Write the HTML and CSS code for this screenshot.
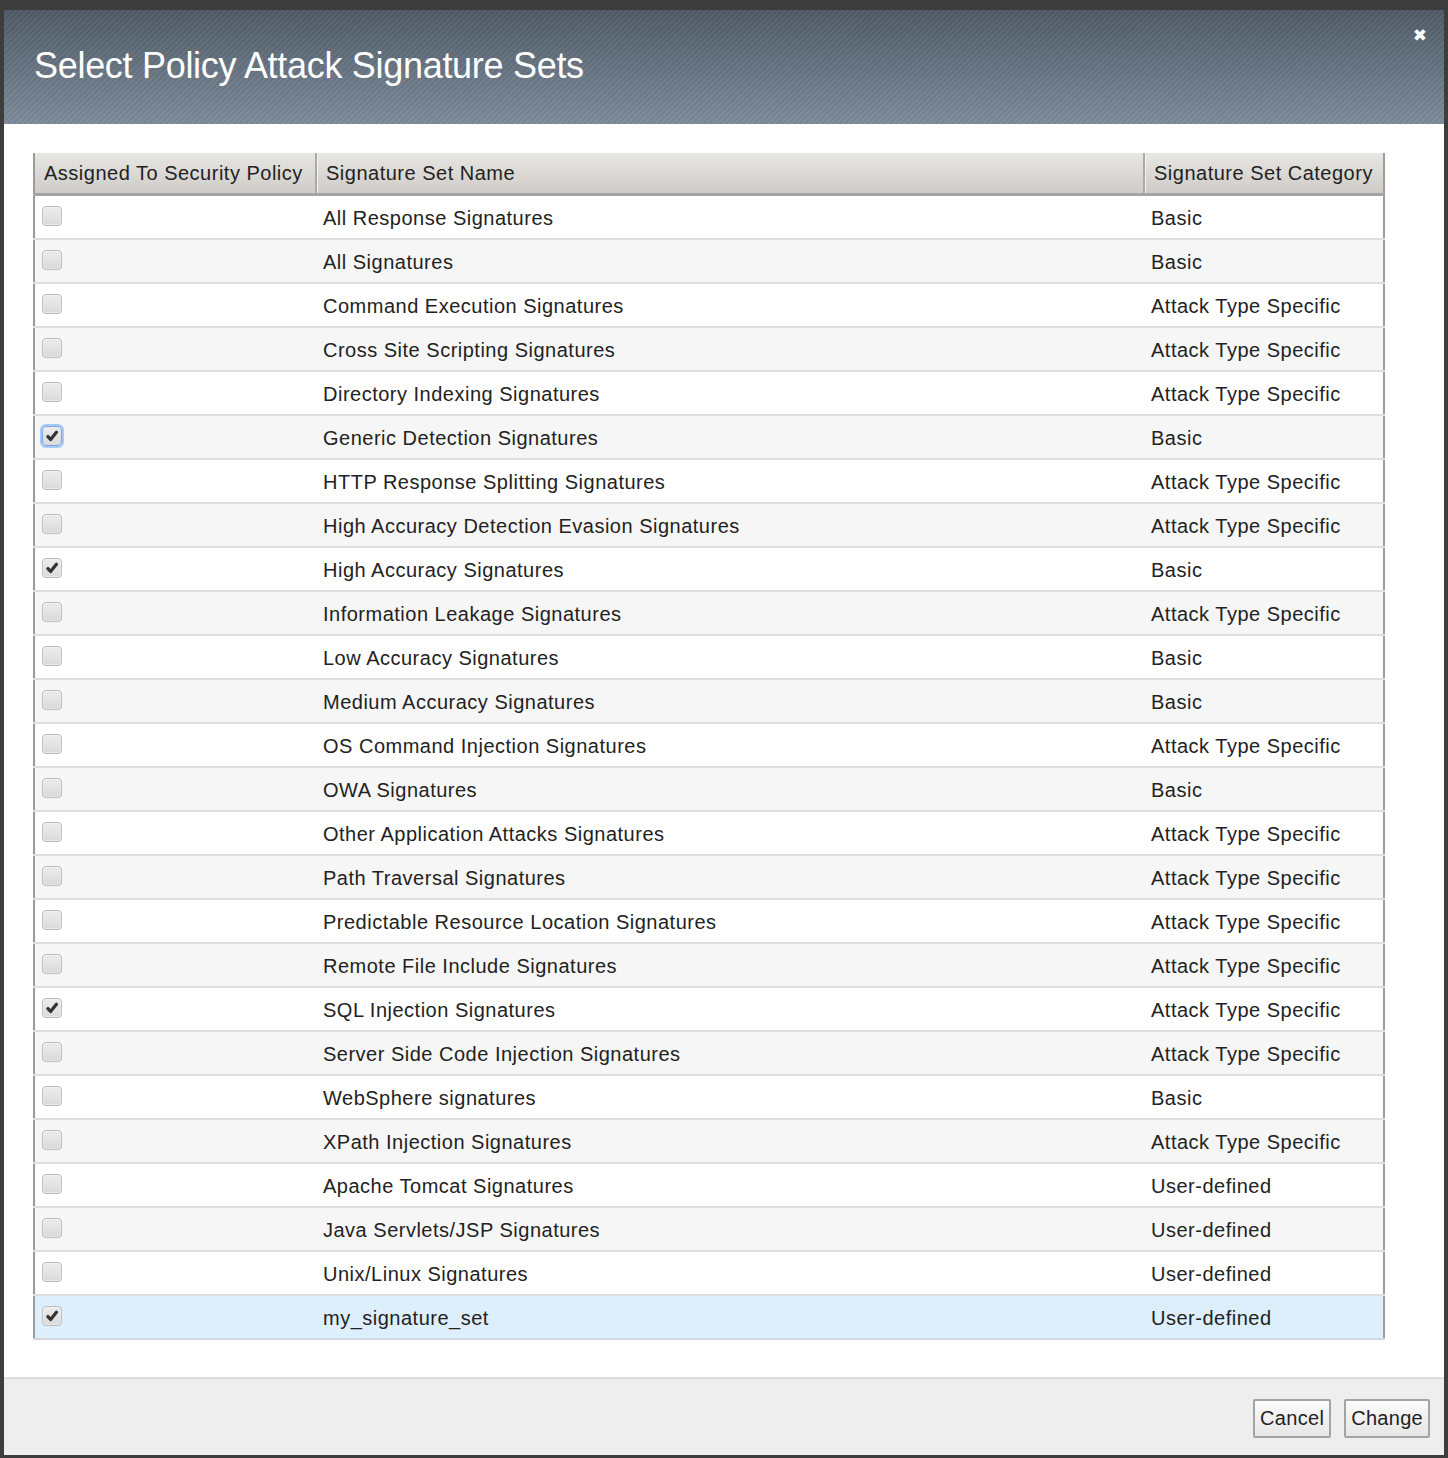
FILE: index.html
```html
<!DOCTYPE html>
<html>
<head>
<meta charset="utf-8">
<link rel="stylesheet" href="styles.css">
</head>
<body>
<div class="dialog">
  <div class="titlebar">
    <h1 class="title">Select Policy Attack Signature Sets</h1>
    <span class="close">&#x2716;</span>
  </div>
  <div class="content">
    <table class="grid">
      <colgroup><col class="c1"><col class="c2"><col class="c3"></colgroup>
      <thead>
        <tr><th>Assigned To Security Policy</th><th>Signature Set Name</th><th>Signature Set Category</th></tr>
      </thead>
      <tbody>
        <tr><td><span class="cb"></span></td><td>All Response Signatures</td><td>Basic</td></tr>
        <tr><td><span class="cb"></span></td><td>All Signatures</td><td>Basic</td></tr>
        <tr><td><span class="cb"></span></td><td>Command Execution Signatures</td><td>Attack Type Specific</td></tr>
        <tr><td><span class="cb"></span></td><td>Cross Site Scripting Signatures</td><td>Attack Type Specific</td></tr>
        <tr><td><span class="cb"></span></td><td>Directory Indexing Signatures</td><td>Attack Type Specific</td></tr>
        <tr><td><span class="cb checked focus"><svg viewBox="0 0 12 12"><path d="M2.5 6.5 L4.8 9 L9.8 2.8" /></svg></span></td><td>Generic Detection Signatures</td><td>Basic</td></tr>
        <tr><td><span class="cb"></span></td><td>HTTP Response Splitting Signatures</td><td>Attack Type Specific</td></tr>
        <tr><td><span class="cb"></span></td><td>High Accuracy Detection Evasion Signatures</td><td>Attack Type Specific</td></tr>
        <tr><td><span class="cb checked"><svg viewBox="0 0 12 12"><path d="M2.5 6.5 L4.8 9 L9.8 2.8" /></svg></span></td><td>High Accuracy Signatures</td><td>Basic</td></tr>
        <tr><td><span class="cb"></span></td><td>Information Leakage Signatures</td><td>Attack Type Specific</td></tr>
        <tr><td><span class="cb"></span></td><td>Low Accuracy Signatures</td><td>Basic</td></tr>
        <tr><td><span class="cb"></span></td><td>Medium Accuracy Signatures</td><td>Basic</td></tr>
        <tr><td><span class="cb"></span></td><td>OS Command Injection Signatures</td><td>Attack Type Specific</td></tr>
        <tr><td><span class="cb"></span></td><td>OWA Signatures</td><td>Basic</td></tr>
        <tr><td><span class="cb"></span></td><td>Other Application Attacks Signatures</td><td>Attack Type Specific</td></tr>
        <tr><td><span class="cb"></span></td><td>Path Traversal Signatures</td><td>Attack Type Specific</td></tr>
        <tr><td><span class="cb"></span></td><td>Predictable Resource Location Signatures</td><td>Attack Type Specific</td></tr>
        <tr><td><span class="cb"></span></td><td>Remote File Include Signatures</td><td>Attack Type Specific</td></tr>
        <tr><td><span class="cb checked"><svg viewBox="0 0 12 12"><path d="M2.5 6.5 L4.8 9 L9.8 2.8" /></svg></span></td><td>SQL Injection Signatures</td><td>Attack Type Specific</td></tr>
        <tr><td><span class="cb"></span></td><td>Server Side Code Injection Signatures</td><td>Attack Type Specific</td></tr>
        <tr><td><span class="cb"></span></td><td>WebSphere signatures</td><td>Basic</td></tr>
        <tr><td><span class="cb"></span></td><td>XPath Injection Signatures</td><td>Attack Type Specific</td></tr>
        <tr><td><span class="cb"></span></td><td>Apache Tomcat Signatures</td><td>User-defined</td></tr>
        <tr><td><span class="cb"></span></td><td>Java Servlets/JSP Signatures</td><td>User-defined</td></tr>
        <tr><td><span class="cb"></span></td><td>Unix/Linux Signatures</td><td>User-defined</td></tr>
        <tr class="selected"><td><span class="cb checked"><svg viewBox="0 0 12 12"><path d="M2.5 6.5 L4.8 9 L9.8 2.8" /></svg></span></td><td>my_signature_set</td><td>User-defined</td></tr>
      </tbody>
    </table>
  </div>
  <div class="footer">
    <button class="btn">Cancel</button>
    <button class="btn">Change</button>
  </div>
</div>
</body>
</html>
```
FILE: styles.css
```css
html, body {
  margin: 0;
  padding: 0;
}
body {
  background: #3d3d3d;
  font-family: "Liberation Sans", Arial, sans-serif;
  color: #222;
  width: 1448px;
  height: 1458px;
  overflow: hidden;
}
.dialog {
  margin: 10px 0 0 4px;
  width: 1440px;
  height: 1445px;
  background: #fff;
  display: flex;
  flex-direction: column;
}
.titlebar {
  height: 114px;
  flex: none;
  display: flex;
  align-items: center;
  justify-content: space-between;
  padding: 0 20px 0 30px;
  box-sizing: border-box;
  background:
    repeating-linear-gradient(135deg, rgba(255,255,255,0.04) 0 2px, rgba(0,0,0,0.03) 2px 4px),
    linear-gradient(#4f5a66, #7d8b9a);
  position: relative;
}
.title {
  margin: 0;
  font-weight: normal;
  font-size: 36px;
  color: #fff;
  margin-top: -2px;
  letter-spacing: -0.3px;
}
.close {
  position: absolute;
  right: 17px;
  top: 15px;
  color: #fff;
  font-size: 17px;
  font-family: "DejaVu Sans", sans-serif;
}
.content {
  flex: 1;
  padding: 29px 0 0 29px;
}
.grid {
  border-collapse: collapse;
  width: 1350px;
  table-layout: fixed;
  font-size: 20px;
  letter-spacing: 0.5px;
  border-left: 2px solid #9c9c9c;
  border-right: 2px solid #9c9c9c;
}
.c1 { width: 282px; }
.c2 { width: 828px; }
.c3 { width: 240px; }
.grid th {
  height: 40px;
  padding: 0 0 0 9px;
  text-align: left;
  font-weight: normal;
  background: linear-gradient(#e8e6e3, #cfccc8);
  border-bottom: 3px solid #a6a4a2;
  border-left: 2px solid #a9a9a9;
  box-shadow: inset 1px 0 0 #f4f4f4;
  white-space: nowrap;
  color: #222;
}
.grid th:first-child {
  border-left: none;
  box-shadow: none;
}
.grid td {
  height: 40px;
  padding: 2px 0 0 7px;
  border-bottom: 2px solid #dedede;
  white-space: nowrap;
}
.grid td:first-child {
  padding-left: 7px;
  vertical-align: top;
  padding-top: 10px;
  height: 32px;
}
.grid tbody tr:nth-child(even) td {
  background: #f6f6f6;
}
.grid tbody tr.selected td {
  background: #ddeefd;
  border-bottom-color: #d3d8de;
}
.cb {
  display: block;
  width: 18px;
  height: 18px;
  border: 1px solid #bdbdbd;
  border-radius: 4px;
  background: linear-gradient(#ececec, #dadada);
  box-shadow: inset 0 0 0 1px rgba(255,255,255,0.35);
}
.cb svg {
  display: block;
  width: 14px;
  height: 14px;
  margin: 2px 0 0 2px;
}
.cb svg path {
  fill: none;
  stroke: #333;
  stroke-width: 2.8;
  stroke-linecap: round;
  stroke-linejoin: round;
}
.cb.focus {
  border-color: #7aa4e6;
  box-shadow: 0 0 0 2px #a9c8f5;
}
.footer {
  flex: none;
  height: 78px;
  border-top: 2px solid #dcdcdc;
  background: #eeeeee;
  display: flex;
  justify-content: flex-end;
  align-items: center;
  gap: 13px;
  padding: 2px 14px 0 0;
  box-sizing: border-box;
}
.btn {
  font-family: "Liberation Sans", Arial, sans-serif;
  font-size: 20px;
  letter-spacing: 0.3px;
  color: #222;
  height: 39px;
  padding: 0 5px;
  background: linear-gradient(#fbfbfb, #e6e6e6);
  border: 2px solid #a4a4a4;
  border-radius: 2px;
}
```
